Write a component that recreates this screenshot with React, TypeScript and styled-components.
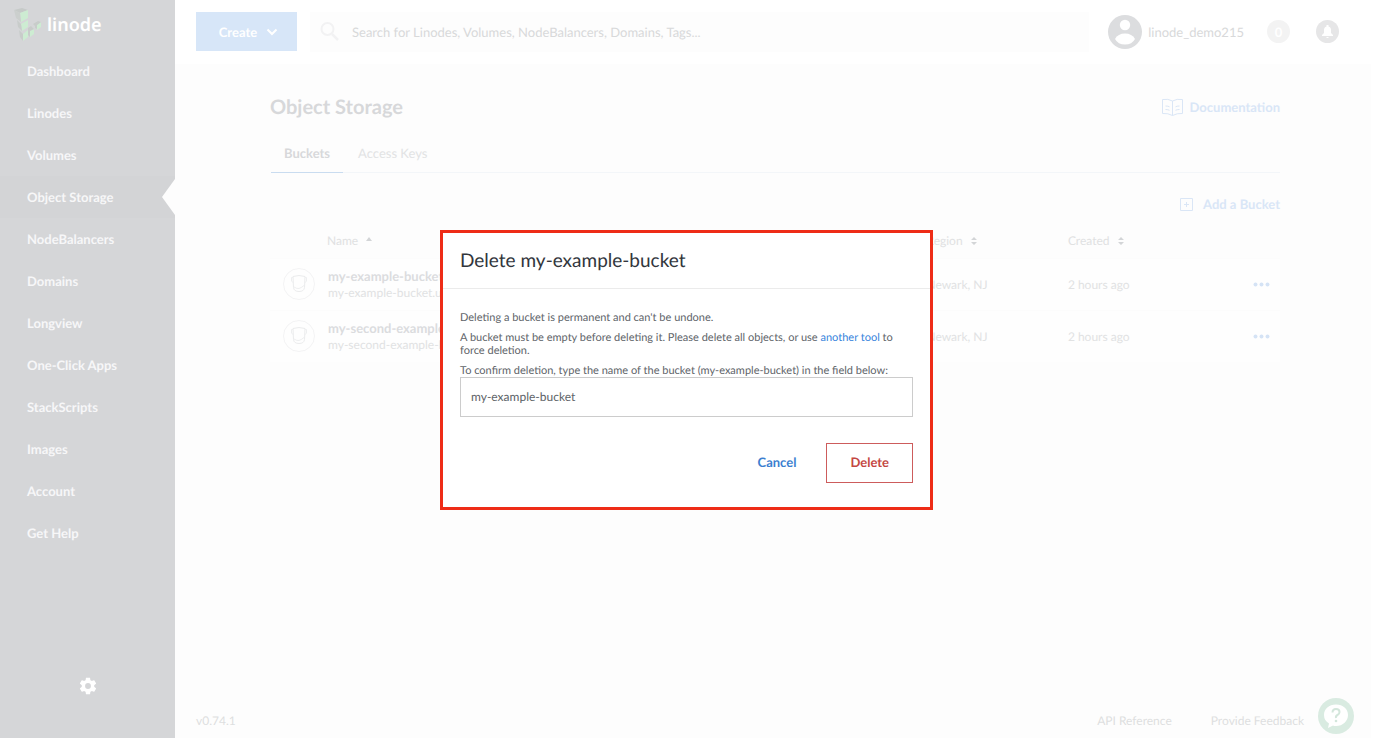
import React, { useState } from 'react';
import styled, { createGlobalStyle, css } from 'styled-components';

const GlobalStyle = createGlobalStyle`
  *, *::before, *::after { box-sizing: border-box; }
  body {
    margin: 0;
    background: #fff;
    color: #d0d1d3;
    font-family: Lato, "Liberation Sans", sans-serif;
    font-size: 13px;
    text-rendering: geometricPrecision;
  }
  h1, h2, p { margin: 0; padding: 0; }
  a { color: inherit; text-decoration: none; }
  button { font: inherit; color: inherit; background: none; border: 0; padding: 0; cursor: pointer; text-rendering: inherit; }
  input { font: inherit; text-rendering: inherit; }
`;

const Page = styled.div`
  display: grid;
  grid-template-columns: 175px 1fr;
  min-height: 100vh;
  padding: 0 17px 17px 0;
`;

const Sidebar = styled.aside`
  display: flex;
  flex-direction: column;
  background: #d5d6d8;
`;

const Logo = styled.a`
  display: flex;
  align-items: center;
  height: 50px;
  padding-left: 13px;
  gap: 4px;
  color: #fff;
  font-family: "Noto Sans", sans-serif;
  font-size: 18px;
  font-weight: 600;
`;

const NavItem = styled.a<{ $active?: boolean }>`
  display: flex;
  align-items: center;
  justify-content: space-between;
  height: 42px;
  padding-left: 27px;
  color: #f7f7f8;
  font-size: 13px;
  font-weight: 700;
  ${(p) => p.$active && css`background: #d3d4d6;`}
`;

const Notch = styled.svg`
  display: block;
  width: 13px;
  height: 36px;
`;

const Settings = styled.button`
  align-self: center;
  display: flex;
  margin-top: auto;
  margin-bottom: 42px;
`;

const Main = styled.div`
  display: flex;
  flex-direction: column;
  min-width: 0;
  background: #fdfdfd;
`;

const TopBar = styled.header`
  display: flex;
  align-items: center;
  height: 64px;
  padding: 0 32px 1px 21px;
  background: #fff;
`;

const CreateButton = styled.button`
  display: flex;
  align-items: center;
  justify-content: center;
  gap: 9px;
  width: 101px;
  height: 39px;
  padding-left: 4px;
  background: #d7e6f8;
  color: #fff;
  font-size: 13px;
  font-weight: 700;
`;

const SearchBox = styled.label`
  display: flex;
  flex: 1;
  align-items: center;
  gap: 8px;
  height: 40px;
  margin: 0 19px 0 13px;
  padding-left: 8px;
  background: #fdfdfd;
`;

const SearchInput = styled.input`
  flex: 1;
  border: 0;
  outline: 0;
  background: none;
  font-size: 13px;
  &::placeholder { color: #d8d9da; opacity: 1; }
`;

const UserButton = styled.button`
  display: flex;
  align-items: center;
  gap: 6px;
  font-size: 13px;
  color: #d8d9da;
`;

const RoundButton = styled.button<{ $tone: string; $space: number }>`
  display: flex;
  align-items: center;
  justify-content: center;
  width: 23px;
  height: 23px;
  margin-left: ${(p) => p.$space}px;
  border-radius: 50%;
  background: ${(p) => p.$tone};
  color: #fff;
  font-size: 13px;
  font-weight: 700;
`;

const Content = styled.main`
  flex: 1;
  padding: 31px 91px 0 95px;
`;

const TitleRow = styled.div`
  display: flex;
  align-items: center;
  justify-content: space-between;
  height: 24px;
`;

const PageTitle = styled.h1`
  font-size: 20px;
  line-height: 24px;
  font-weight: 700;
  color: #d7d8da;
`;

const BlueLink = styled.a`
  display: flex;
  align-items: center;
  gap: 7px;
  color: #d9e6f7;
  font-size: 13px;
  font-weight: 700;
`;

const BlueButton = styled(BlueLink).attrs({ as: 'button' })`
  gap: 10px;
  margin: 21px 0 10px auto;
  line-height: 20px;
`;

const Tabs = styled.div`
  display: flex;
  margin: 14px 0 0 1px;
  border-bottom: 1px solid #f3f6f9;
`;

const Tab = styled.button<{ $active?: boolean }>`
  height: 40px;
  margin-bottom: -1px;
  padding: 0 13px;
  border-bottom: 1px solid ${(p) => (p.$active ? '#c9dcf0' : 'transparent')};
  color: ${(p) => (p.$active ? '#d7d8da' : '#e2e3e4')};
  font-size: 13px;
  font-weight: ${(p) => (p.$active ? 700 : 400)};
  & + & { margin-left: 2px; }
`;

const BucketTable = styled.table`
  width: 100%;
  table-layout: fixed;
  border-collapse: collapse;
  background: #fefefe;
`;

const HeadCell = styled.th<{ $indent?: boolean }>`
  height: 34px;
  padding: 0 0 0 ${(p) => (p.$indent ? 57 : 0)}px;
  text-align: left;
  font-size: 12px;
  font-weight: 400;
  color: #e0e1e2;
  background: #fdfdfd;
`;

const NameCol = styled.col`
  width: 65%;
`;

const RegionCol = styled.col`
  width: 14%;
`;

const CreatedCol = styled.col`
  width: 15%;
`;

const SortButton = styled.button`
  display: flex;
  align-items: center;
  gap: 8px;
`;

const Cell = styled.td`
  height: 52px;
  padding: 0 10px 0 0;
  border-top: 1px solid #fcfcfc;
  font-size: 12px;
  color: #e1e2e3;
  white-space: nowrap;
`;

const NameCell = styled.div`
  display: flex;
  align-items: center;
  gap: 13px;
  padding-left: 13px;
`;

const BucketName = styled.div`
  color: #dbdcde;
  font-size: 13px;
  font-weight: 700;
  line-height: 17px;
`;

const BucketHost = styled.div`
  font-size: 12px;
  line-height: 16px;
`;

const MoreButton = styled.button`
  display: flex;
  margin-left: auto;
`;

const Footer = styled.footer`
  display: flex;
  align-items: center;
  gap: 39px;
  height: 36px;
  padding: 0 67px 0 21px;
  font-size: 12px;
  color: #dedfe0;
`;

const Version = styled.span`
  margin-right: auto;
`;

const HelpButton = styled.button`
  position: fixed;
  right: 34px;
  bottom: 21px;
  display: flex;
`;

const Backdrop = styled.div`
  position: fixed;
  inset: 0;
  display: flex;
  align-items: center;
  justify-content: center;
  padding: 0 15px 16px 0;
`;

const Dialog = styled.div`
  width: 493px;
  max-width: 100%;
  border: 3px solid #ee2c17;
  background: #fff;
  color: #606469;
`;

const DialogTitle = styled.h2`
  height: 56px;
  padding: 16px 17px 0;
  border-bottom: 1px solid #ebebeb;
  color: #32363c;
  font-size: 19px;
  line-height: 24px;
  font-weight: 400;
`;

const DialogBody = styled.form`
  padding: 22px 17px 24px;
  font-size: 11px;
  line-height: 13px;
`;

const Note = styled.p`
  margin-bottom: 7px;
`;

const ToolLink = styled.a`
  color: #3683dc;
`;

const ConfirmLabel = styled.label`
  display: block;
`;

const ConfirmInput = styled.input`
  display: block;
  width: 100%;
  height: 40px;
  padding: 0 10px;
  border: 1px solid #ccc;
  color: #606469;
  font-size: 12px;
  outline: 0;
`;

const Actions = styled.div`
  display: flex;
  justify-content: flex-end;
  margin-top: 26px;
`;

const ActionButton = styled.button<{ $danger?: boolean }>`
  height: 40px;
  padding: 0 ${(p) => (p.$danger ? 23 : 30)}px;
  border: ${(p) => (p.$danger ? '1px solid #cd5c5c' : '0')};
  color: ${(p) => (p.$danger ? '#c44742' : '#3b7fd0')};
  font-size: 13px;
  font-weight: 700;
`;

const NAV = ['Dashboard', 'Linodes', 'Volumes', 'Object Storage', 'NodeBalancers', 'Domains', 'Longview',
  'One-Click Apps', 'StackScripts', 'Images', 'Account', 'Get Help'];

const BUCKETS = ['my-example-bucket', 'my-second-example-bucket'];

const LogoMark = () => (
  <svg width="30" height="36" viewBox="0 0 30 36" aria-hidden="true">
    <path d="M1 3l8-2 6 2-8 3z" fill="#c6cac8" />
    <path d="M7 6l8-3v8l-7 4z" fill="#cdecd2" />
    <path d="M1 3l6 3 1 9-5-4z" fill="#cbcfcd" />
    <path d="M8 17l7-4v7l-6 4z" fill="#cdecd2" />
    <path d="M4 13l4 4 1 7-4-4z" fill="#c8ccca" />
    <path d="M10 27l5-4v7l-5 4z" fill="#cdecd2" />
    <path d="M6 23l4 4v7l-3-4z" fill="#c8ccca" />
    <path d="M17 24l4-2v5l-4 3z" fill="#cdecd2" />
    <path d="M15 21l3-2 3 3-4 2v6l-2-2z" fill="#c8ccca" />
    <path d="M24 18l4-3v5l-4 3z" fill="#cdecd2" />
    <path d="M20 17l5-3 3 1-4 3v4l-2-1v-2z" fill="#c8ccca" />
  </svg>
);

const BucketIcon = () => (
  <svg width="32" height="32" viewBox="0 0 32 32" fill="none" stroke="#f3f3f4" aria-hidden="true">
    <circle cx="16" cy="16" r="15.5" />
    <path d="M10 8.500q6-2 12 0l-.5 11q-.5 4-5.500 4t-5.500-4z" stroke="#ebeced" />
    <path d="M10 9.500H8.500v3.500l2 2M22 9.500h1.500V13l-2 2M11 19q3 2 5 1.500t5-3" stroke="#eeeff0" />
  </svg>
);

const SortIcon = ({ single }: { single?: boolean }) => (
  <svg width="6" height="10" viewBox="0 0 6 10" fill="#d3d5d7" aria-hidden="true">
    {single ? <path d="M0 5l3-4 3 4z" /> : <path d="M0 4l3-3 3 3zM0 6h6l-3 3z" />}
  </svg>
);

export default function App() {
  const [name, setName] = useState('my-example-bucket');
  return (
    <>
      <GlobalStyle />
      <Page>
        <Sidebar>
          <Logo href="#"><LogoMark />linode</Logo>
          <nav>
            {NAV.map((item) => (
              <NavItem key={item} href="#" $active={item === 'Object Storage'}>
                {item}
                {item === 'Object Storage' && (
                  <Notch viewBox="0 0 13 36" aria-hidden="true"><path d="M13 0v36L0 18z" fill="#fdfdfd" /></Notch>
                )}
              </NavItem>
            ))}
          </nav>
          <Settings aria-label="Settings">
            <svg width="20" height="20" viewBox="0 0 24 24" fill="#fff" aria-hidden="true">
              <path d="M19.430 12.980c.04-.32.07-.64.07-.98s-.03-.66-.07-.98l2.110-1.650c.19-.15.24-.42.12-.64l-2-3.460c-.12-.22-.39-.3-.61-.22l-2.490 1c-.52-.4-1.080-.73-1.690-.98l-.38-2.650C14.460 2.180 14.250 2 14 2h-4c-.25 0-.46.18-.49.42l-.38 2.650c-.61.25-1.170.59-1.690.98l-2.490-1c-.23-.09-.49 0-.61.22l-2 3.460c-.13.22-.07.49.12.64l2.110 1.650c-.04.32-.07.65-.07.98s.03.66.07.98l-2.110 1.650c-.19.15-.24.42-.12.64l2 3.460c.12.22.39.3.61.22l2.490-1c.52.4 1.080.73 1.690.98l.38 2.650c.03.24.24.42.49.42h4c.25 0 .46-.18.49-.42l.38-2.650c.61-.25 1.170-.59 1.690-.98l2.490 1c.23.09.49 0 .61-.22l2-3.460c.12-.22.07-.49-.12-.64zM12 15.500A3.500 3.500 0 1 1 12 8.500a3.500 3.500 0 0 1 0 7z" />
            </svg>
          </Settings>
        </Sidebar>
        <Main>
          <TopBar>
            <CreateButton>
              Create
              <svg width="12" height="8" viewBox="0 0 12 8" fill="none" stroke="#fff" strokeWidth="2" aria-hidden="true"><path d="M1.500 1.500L6 6l4.500-4.500" /></svg>
            </CreateButton>
            <SearchBox>
              <svg width="24" height="24" viewBox="0 0 24 24" fill="none" stroke="#f2f2f3" strokeWidth="2" aria-hidden="true">
                <circle cx="9.500" cy="9" r="6" /><path d="M14 14l6 6" strokeWidth="2.500" />
              </svg>
              <SearchInput aria-label="Search" placeholder="Search for Linodes, Volumes, NodeBalancers, Domains, Tags..." />
            </SearchBox>
            <UserButton>
              <svg width="34" height="34" viewBox="0 0 34 34" aria-hidden="true">
                <circle cx="17" cy="17" r="17" fill="#dcdddf" />
                <circle cx="17" cy="10" r="5.200" fill="#fff" />
                <path d="M7 24q3-5.500 10-5.500T27 24q-3 5.500-10 5.500T7 24z" fill="#fff" />
              </svg>
              linode_demo215
            </UserButton>
            <RoundButton $tone="#f3f3f3" $space={23}>0</RoundButton>
            <RoundButton $tone="#e6e6e7" $space={26} aria-label="Notifications">
              <svg width="13" height="15" viewBox="0 0 13 15" fill="#fff" aria-hidden="true">
                <path d="M5.500 1h2v1.500Q10 3 10 6v3l2 2v1H1v-1l2-2V6q0-3 2.500-3.500zM5 13h3q-1.500 2-3 0z" />
              </svg>
            </RoundButton>
          </TopBar>
          <Content>
            <TitleRow>
              <PageTitle>Object Storage</PageTitle>
              <BlueLink href="#">
                <svg width="21" height="19" viewBox="0 0 21 19" fill="none" stroke="#dae6f6" aria-hidden="true">
                  <path d="M10.500 3Q6 .5.500 1.500v14q5.500-.5 10 2 4.500-2.500 10-2v-14q-5.500-1-10 1.500zv14.500M3.500 8q2.500 0 4 .8M3.500 11.500q2.500 0 4 .8M17.500 8q-2.500 0-4 .8M17.500 11.500q-2.500 0-4 .8" />
                </svg>
                Documentation
              </BlueLink>
            </TitleRow>
            <Tabs role="tablist">
              <Tab role="tab" aria-selected="true" $active>Buckets</Tab>
              <Tab role="tab" aria-selected="false">Access Keys</Tab>
            </Tabs>
            <BlueButton>
              <svg width="13" height="13" viewBox="0 0 13 13" fill="none" stroke="#dae6f6" aria-hidden="true">
                <path d="M.5.500h12v12H.5zM6.500 4v5M4 6.500h5" />
              </svg>
              Add a Bucket
            </BlueButton>
            <BucketTable>
              <colgroup>
                <NameCol />
                <RegionCol />
                <CreatedCol />
                <col />
              </colgroup>
              <thead>
                <tr>
                  <HeadCell $indent><SortButton>Name <SortIcon single /></SortButton></HeadCell>
                  <HeadCell><SortButton>Region <SortIcon /></SortButton></HeadCell>
                  <HeadCell><SortButton>Created <SortIcon /></SortButton></HeadCell>
                  <HeadCell />
                </tr>
              </thead>
              <tbody>
                {BUCKETS.map((bucket) => (
                  <tr key={bucket}>
                    <Cell>
                      <NameCell>
                        <BucketIcon />
                        <div>
                          <BucketName>{bucket}</BucketName>
                          <BucketHost>{bucket}.us-east-1.linodeobjects.com</BucketHost>
                        </div>
                      </NameCell>
                    </Cell>
                    <Cell>Newark, NJ</Cell>
                    <Cell>2 hours ago</Cell>
                    <Cell>
                      <MoreButton aria-label={`Actions for ${bucket}`}>
                        <svg width="17" height="5" viewBox="0 0 17 5" fill="#d5e3f5" aria-hidden="true">
                          <circle cx="2.500" cy="2.500" r="2" /><circle cx="8.500" cy="2.500" r="2" /><circle cx="14.500" cy="2.500" r="2" />
                        </svg>
                      </MoreButton>
                    </Cell>
                  </tr>
                ))}
              </tbody>
            </BucketTable>
          </Content>
          <Footer>
            <Version>v0.74.1</Version>
            <a href="#">API Reference</a>
            <a href="#">Provide Feedback</a>
          </Footer>
        </Main>
      </Page>
      <HelpButton aria-label="Help">
        <svg width="36" height="36" viewBox="0 0 36 36" aria-hidden="true">
          <circle cx="18" cy="18" r="18" fill="#d9ebe1" />
          <path d="M18 6.500c7 0 12 4.500 12 10.500s-5 11-12 11q-2 0-3-.5l-5 2.500 1-4.500Q6 22.500 6 17C6 11 11 6.500 18 6.500z" fill="#fff" />
          <path d="M14.500 14.500q0-3.500 3.500-3.500t3.500 3q0 2-2 3T18 20" fill="none" stroke="#d3e6db" strokeWidth="2" />
          <circle cx="18" cy="23" r="1.300" fill="#d3e6db" />
        </svg>
      </HelpButton>
      <Backdrop>
        <Dialog role="dialog" aria-modal="true" aria-labelledby="dialog-title">
          <DialogTitle id="dialog-title">Delete my-example-bucket</DialogTitle>
          <DialogBody onSubmit={(e) => e.preventDefault()}>
            <Note>Deleting a bucket is permanent and can't be undone.</Note>
            <Note>
              A bucket must be empty before deleting it. Please delete all objects, or use{' '}
              <ToolLink href="#">another tool</ToolLink> to force deletion.
            </Note>
            <ConfirmLabel htmlFor="bucket-name">
              To confirm deletion, type the name of the bucket (my-example-bucket) in the field below:
            </ConfirmLabel>
            <ConfirmInput id="bucket-name" value={name} onChange={(e) => setName(e.target.value)} />
            <Actions>
              <ActionButton type="button">Cancel</ActionButton>
              <ActionButton type="submit" $danger>Delete</ActionButton>
            </Actions>
          </DialogBody>
        </Dialog>
      </Backdrop>
    </>
  );
}
